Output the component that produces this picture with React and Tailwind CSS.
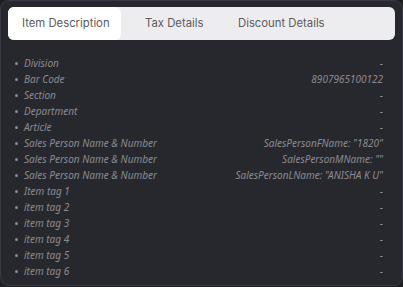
import React, { useState } from 'react';

const rows = [
  { label: 'Division', value: '-' },
  { label: 'Bar Code', value: '8907965100122' },
  { label: 'Section', value: '-' },
  { label: 'Department', value: '-' },
  { label: 'Article', value: '-' },
  { label: 'Sales Person Name & Number', value: 'SalesPersonFName: "1820"' },
  { label: 'Sales Person Name & Number', value: 'SalesPersonMName: ""' },
  { label: 'Sales Person Name & Number', value: 'SalesPersonLName: "ANISHA K U"' },
  { label: 'Item tag 1', value: '-' },
  { label: 'item tag 2', value: '-' },
  { label: 'item tag 3', value: '-' },
  { label: 'item tag 4', value: '-' },
  { label: 'item tag 5', value: '-' },
  { label: 'item tag 6', value: '-' },
];

const tabs = ['Item Description', 'Tax Details', 'Discount Details'];

const App = () => {
  const [active, setActive] = useState(0);

  return (
    <div className="w-[403px] h-[287px] bg-[#1d1d23] overflow-hidden">
      <div className="h-[286px] rounded-[9px] border border-[#3a3a44] bg-[#27282e] px-[7px] pt-[6px]">
        {/* Tabs */}
        <div className="flex h-[33px] rounded-[6px] bg-[#ededf0] font-['Inter',sans-serif] text-[11.3px] text-[#5a5a60]">
          {tabs.map((tab, i) => (
            <button
              key={tab}
              onClick={() => setActive(i)}
              className={`h-full flex items-center whitespace-nowrap ${i === 0 ? 'pl-[14px] w-[113px]' : i === 1 ? 'pl-[24px] w-[93px]' : 'pl-[24px]'} ${active === i ? 'bg-white rounded-[6px]' : ''}`}
            >
              {tab}
            </button>
          ))}
        </div>

        {/* Details list */}
        <ul className="mt-[15px] font-['Noto_Sans',sans-serif] italic text-[10px] text-[#8a8a91]">
          {rows.map((row, i) => (
            <li key={i} className="flex items-center justify-between h-[16px] pl-[7px] pr-[12px]">
              <span className="flex items-center whitespace-nowrap">
                <span className="w-[3px] h-[3px] rounded-full bg-[#8a8a91] mr-[6px]" />
                {row.label}
              </span>
              <span className="whitespace-nowrap">{row.value}</span>
            </li>
          ))}
        </ul>
      </div>
    </div>
  );
};

export default App;
